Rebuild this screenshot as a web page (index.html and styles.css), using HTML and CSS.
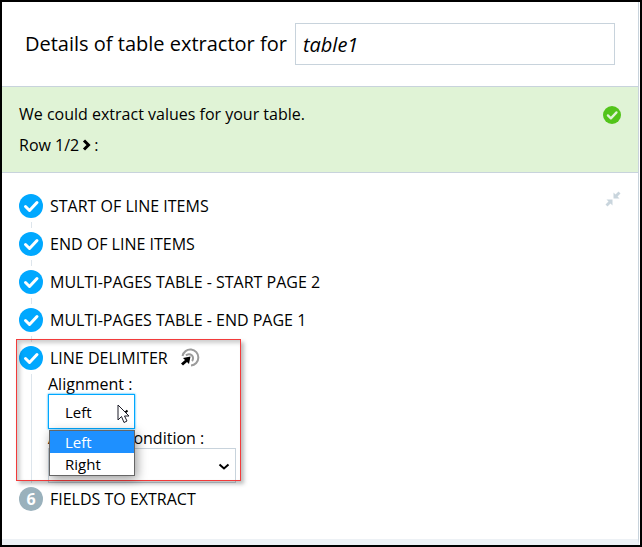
FILE: index.html
```html
<!DOCTYPE html>
<html lang="en">
<head>
<meta charset="utf-8">
<title>Table extractor</title>
<link rel="stylesheet" href="styles.css">
</head>
<body>
<svg class="defs" width="0" height="0" aria-hidden="true">
  <symbol id="check" viewBox="0 0 24 24"><circle cx="12" cy="12" r="12"/><path d="M6.500 12.500l4 4 7.500-8" fill="none" stroke="currentColor" stroke-width="3" stroke-linecap="round" stroke-linejoin="round"/></symbol>
</svg>
<div class="window">
  <main class="panel">
    <header class="header">
      <label class="title" for="name">Details of table extractor for</label>
      <input class="name" id="name" type="text" value="table1">
    </header>
    <section class="status">
      <div>
        <p class="message">We could extract values for your table.</p>
        <p class="message">Row 1/2<button class="next" type="button" aria-label="Next row"><svg width="10" height="12" viewBox="0 0 10 12"><path d="M2 1.500L6.500 6L2 10.500" fill="none" stroke="currentColor" stroke-width="3"/></svg></button>:</p>
      </div>
      <svg class="ok" width="18" height="18"><use href="#check"/></svg>
    </section>
    <section class="body">
      <ol class="steps">
        <li class="step"><div class="rail"><svg class="marker"><use href="#check"/></svg></div><h2 class="name-row">START OF LINE ITEMS</h2></li>
        <li class="step"><div class="rail"><svg class="marker"><use href="#check"/></svg></div><h2 class="name-row">END OF LINE ITEMS</h2></li>
        <li class="step"><div class="rail"><svg class="marker"><use href="#check"/></svg></div><h2 class="name-row">MULTI-PAGES TABLE - START PAGE 2</h2></li>
        <li class="step"><div class="rail"><svg class="marker"><use href="#check"/></svg></div><h2 class="name-row">MULTI-PAGES TABLE - END PAGE 1</h2></li>
        <li class="step open">
          <div class="rail"><svg class="marker"><use href="#check"/></svg></div>
          <div>
            <h2 class="name-row">LINE DELIMITER
              <button class="pick" type="button" aria-label="Pick on page"><svg width="20" height="20" viewBox="0 0 20 20"><g fill="none" stroke="#9b9b9b" stroke-width="2"><path d="M2.500 8A8 8 0 1 1 11 17.500"/><path d="M6 7.500A4 4 0 1 1 12 13"/></g><path d="M10.500 8.500L3 10l2 2-4 3.500 2 2 4-3.500 2 2z"/></svg></button>
            </h2>
            <div class="fields">
              <label class="label" for="alignment">Alignment :</label>
              <div class="picker">
                <select class="select active" id="alignment"><option selected>Left</option><option>Right</option></select>
                <svg class="chevron" width="12" height="8" viewBox="0 0 12 8"><path d="M1.500 1.500L6 5.500l4.500-4" fill="none" stroke="currentColor" stroke-width="2"/></svg>
                <ul class="menu" role="listbox" aria-label="Alignment">
                  <li class="choice selected" role="option" aria-selected="true">Left</li>
                  <li class="choice" role="option" aria-selected="false">Right</li>
                </ul>
                <svg class="cursor" width="13" height="20" viewBox="0 0 13 20"><path d="M1 1v15l3.500-3.500L7 18.500l3-1.500-2.500-5H12z" fill="#fff" stroke="#1c1c28"/></svg>
              </div>
              <label class="label" for="condition">Activation condition :</label>
              <div class="picker wide">
                <select class="select" id="condition"><option></option></select>
                <svg class="chevron" width="12" height="8" viewBox="0 0 12 8"><path d="M1.500 1.500L6 5.500l4.500-4" fill="none" stroke="currentColor" stroke-width="2"/></svg>
              </div>
            </div>
          </div>
          <div class="highlight"></div>
        </li>
        <li class="step"><div class="rail"><span class="marker number">6</span></div><h2 class="name-row">FIELDS TO EXTRACT</h2></li>
      </ol>
      <button class="collapse" type="button" aria-label="Collapse"><svg width="16" height="16" viewBox="0 0 16 16" fill="#c9d5dd"><path d="M8.500 7.500V1.500l2 2L13.500.5l2 2-3 3 2 2zM7.500 8.500V14.500l-2-2-3 3-2-2 3-3-2-2z"/></svg></button>
    </section>
  </main>
</div>
</body>
</html>
```

FILE: styles.css
```css
* { box-sizing: border-box; }

body {
  margin: 0;
  color: #000;
  font: 16px/24px "Open Sans", sans-serif;
}

button {
  padding: 0;
  border: 0;
  background: none;
  color: inherit;
}

svg { display: block; }

.defs { position: absolute; }

.window {
  display: flex;
  min-height: 100vh;
  padding-right: 1px;
  border: 2px solid #000;
}

.panel {
  display: flex;
  flex: 1;
  flex-direction: column;
  border-right: 1px solid #c8d3dc;
  border-bottom: 6px solid #edf1f5;
}

.header {
  display: flex;
  align-items: center;
  gap: 8px;
  padding: 21px 23px;
}

.title { font-size: 20px; white-space: nowrap; }

.name {
  flex: 1;
  min-width: 0;
  height: 42px;
  padding: 0 7px;
  border: 1px solid #c8d3dc;
  font: italic 20px "Open Sans", sans-serif;
}

.status {
  display: flex;
  justify-content: space-between;
  height: 87px;
  padding: 11px 17px;
  border: solid #c8d3dc;
  border-width: 1px 0;
  background: #e0f3d6;
}

.message {
  display: flex;
  align-items: center;
  height: 31px;
  margin: 0;
}

.next { margin: 0 2px 0 3px; }

.ok {
  margin-top: 8px;
  fill: #52c41a;
  color: #e0f3d6;
}

.body {
  display: flex;
  justify-content: space-between;
  align-items: flex-start;
  padding: 21px 17px;
}

.steps { margin: 0; padding: 0; list-style: none; }

.step {
  display: flex;
  gap: 7px;
  min-height: 38px;
  position: relative;
}

.step.open { min-height: 141px; }

.step:last-child { min-height: 24px; }

.rail {
  display: flex;
  flex-direction: column;
  align-items: center;
}

.step:not(:last-child) .rail::after {
  content: "";
  flex: 1;
  width: 1px;
  margin: 4px 0;
  background: #dde5ec;
}

.marker {
  width: 24px;
  height: 24px;
  fill: #00a8ff;
  color: #fff;
}

.number {
  border-radius: 50%;
  background: #9ab1bc;
  font-weight: 700;
  text-align: center;
}

.name-row {
  display: flex;
  gap: 12px;
  height: 24px;
  margin: 0;
  font-size: 16px;
  font-weight: 400;
}

.fields { width: 188px; margin: 5px 0 0 -2px; }

.label {
  display: block;
  line-height: 19px;
}

.picker {
  position: relative;
  width: 87px;
}

.picker.wide { width: auto; }

.select {
  display: block;
  width: 100%;
  height: 35px;
  padding: 0 16px;
  border: 1px solid #c8d3dc;
  border-radius: 0;
  appearance: none;
  background: #fff;
  color: #000;
  font: 15px "Open Sans", sans-serif;
}

.active { border-color: #00a8ff; box-shadow: 0 0 2px #00a8ff; }

.chevron {
  position: absolute;
  top: 15px;
  right: 6px;
}

.menu {
  position: absolute;
  z-index: 1;
  top: 100%;
  left: 1px;
  width: 86px;
  margin: 1px 0 0;
  padding: 0;
  border: 1px solid #666;
  background: #fff;
  box-shadow: 2px 3px 10px #0006;
  font-size: 15px;
  line-height: 22px;
  list-style: none;
}

.choice { padding-left: 15px; }

.selected { background: #1e90ff; color: #fff; }

.cursor {
  position: absolute;
  z-index: 2;
  top: 10px;
  left: 69px;
}

.highlight {
  position: absolute;
  top: -7px;
  left: -3px;
  width: 225px;
  height: 142px;
  border: 1px solid #f23b3b;
  box-shadow: 3px 3px 4px #0004, inset 3px 3px 4px #0003;
  pointer-events: none;
}

.collapse { margin-top: -3px; }
```
